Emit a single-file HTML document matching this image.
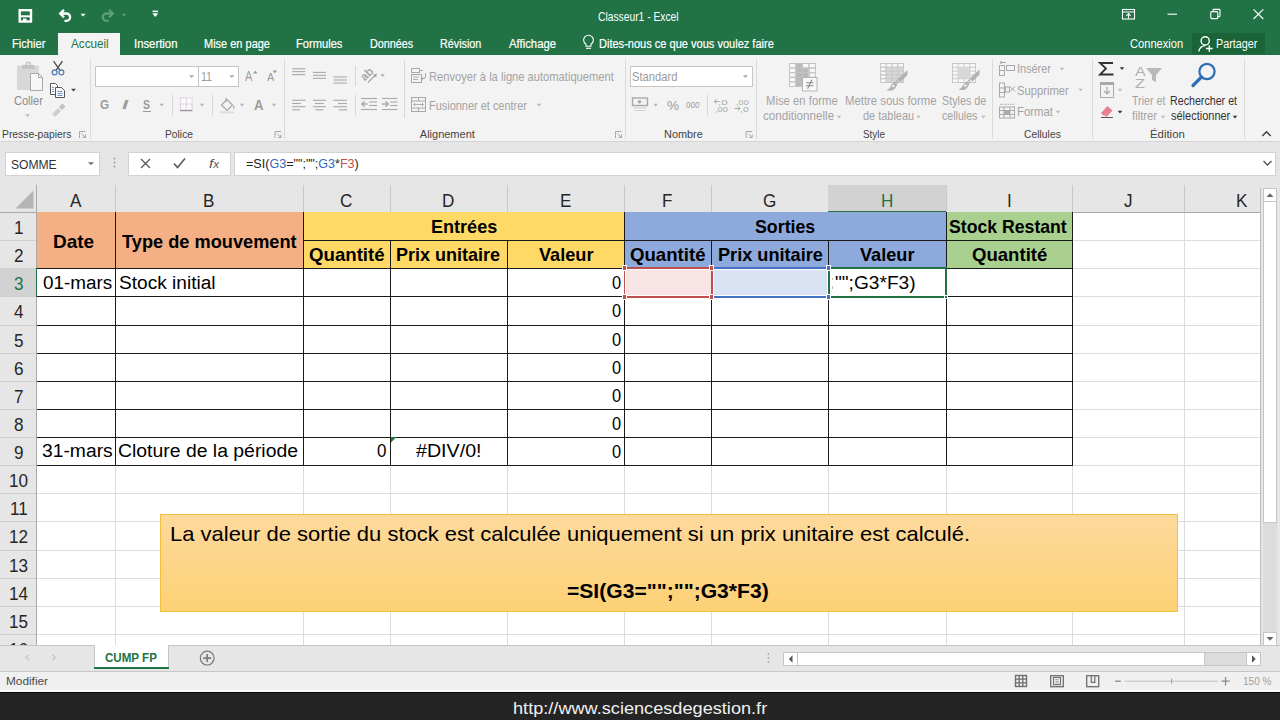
<!DOCTYPE html><html><head><meta charset="utf-8"><title>Excel</title><style>
*{margin:0;padding:0;box-sizing:border-box}
html,body{width:1280px;height:720px;overflow:hidden;background:#fff;font-family:"Liberation Sans",sans-serif}
.a{position:absolute}
.t{position:absolute;white-space:nowrap;line-height:1;transform-origin:0 0}
svg{position:absolute;left:0;top:0}
</style></head><body>
<div class="a" style="left:0px;top:0px;width:1280px;height:55px;background:#217346"></div>
<div class="t" style="left:598.40px;top:10.60px;font-size:12px;color:#ffffff;transform:scaleX(0.8574);">Classeur1 - Excel</div>
<div class="a" style="left:58px;top:33px;width:62px;height:22px;background:#f3f3f3"></div>
<div class="t" style="left:70.50px;top:37.80px;font-size:12px;color:#217346;transform:scaleX(0.9737);">Accueil</div>
<div class="t" style="left:11.57px;top:37.80px;font-size:12px;color:#ffffff;transform:scaleX(0.9286);-webkit-text-stroke:0.2px #fff;">Fichier</div>
<div class="t" style="left:133.56px;top:37.80px;font-size:12px;color:#ffffff;transform:scaleX(0.9444);-webkit-text-stroke:0.2px #fff;">Insertion</div>
<div class="t" style="left:203.78px;top:37.80px;font-size:12px;color:#ffffff;transform:scaleX(0.9155);-webkit-text-stroke:0.2px #fff;">Mise en page</div>
<div class="t" style="left:296.07px;top:37.80px;font-size:12px;color:#ffffff;transform:scaleX(0.9286);-webkit-text-stroke:0.2px #fff;">Formules</div>
<div class="t" style="left:369.70px;top:37.80px;font-size:12px;color:#ffffff;transform:scaleX(0.8979);-webkit-text-stroke:0.2px #fff;">Données</div>
<div class="t" style="left:439.70px;top:37.80px;font-size:12px;color:#ffffff;transform:scaleX(0.8978);-webkit-text-stroke:0.2px #fff;">Révision</div>
<div class="t" style="left:508.75px;top:37.80px;font-size:12px;color:#ffffff;transform:scaleX(0.9450);-webkit-text-stroke:0.2px #fff;">Affichage</div>
<div class="t" style="left:599.38px;top:37.80px;font-size:12px;color:#ffffff;transform:scaleX(0.9196);-webkit-text-stroke:0.2px #fff;">Dites-nous ce que vous voulez faire</div>
<div class="t" style="left:1129.50px;top:37.80px;font-size:12px;color:#ffffff;transform:scaleX(0.9263);">Connexion</div>
<div class="a" style="left:1192px;top:33px;width:73px;height:21px;background:#1a6438"></div>
<div class="t" style="left:1215.80px;top:37.80px;font-size:12px;color:#ffffff;transform:scaleX(0.9000);">Partager</div>
<div class="a" style="left:0px;top:55px;width:1280px;height:86px;background:#f3f3f3"></div>
<div class="a" style="left:0px;top:141px;width:1280px;height:1px;background:#d5d5d5"></div>
<div class="a" style="left:90px;top:59px;width:1px;height:80px;background:#dadada"></div>
<div class="a" style="left:284px;top:59px;width:1px;height:80px;background:#dadada"></div>
<div class="a" style="left:625px;top:59px;width:1px;height:80px;background:#dadada"></div>
<div class="a" style="left:756px;top:59px;width:1px;height:80px;background:#dadada"></div>
<div class="a" style="left:992px;top:59px;width:1px;height:80px;background:#dadada"></div>
<div class="a" style="left:1092px;top:59px;width:1px;height:80px;background:#dadada"></div>
<div class="a" style="left:1244px;top:59px;width:1px;height:80px;background:#dadada"></div>
<div class="t" style="left:2.06px;top:128.60px;font-size:11px;color:#444444;transform:scaleX(0.9384);">Presse-papiers</div>
<div class="t" style="left:165.37px;top:128.60px;font-size:11px;color:#444444;transform:scaleX(0.9345);">Police</div>
<div class="t" style="left:419.80px;top:128.60px;font-size:11px;color:#444444;">Alignement</div>
<div class="t" style="left:663.81px;top:128.60px;font-size:11px;color:#444444;transform:scaleX(0.9921);">Nombre</div>
<div class="t" style="left:863.30px;top:128.60px;font-size:11px;color:#444444;transform:scaleX(0.8958);">Style</div>
<div class="t" style="left:1023.50px;top:128.60px;font-size:11px;color:#444444;transform:scaleX(0.9410);">Cellules</div>
<div class="t" style="left:1150.27px;top:128.60px;font-size:11px;color:#444444;transform:scaleX(1.0344);">Édition</div>
<div class="t" style="left:13.50px;top:95.00px;font-size:12px;color:#8a8a8a;transform:scaleX(0.9194);">Coller</div>
<div class="a" style="left:95px;top:66px;width:104px;height:21px;background:#fff;border:1px solid #c6c6c6"></div>
<div class="a" style="left:198px;top:66px;width:41px;height:21px;background:#fff;border:1px solid #c6c6c6"></div>
<div class="t" style="left:200.85px;top:70.80px;font-size:12.5px;color:#9a9a9a;transform:scaleX(0.8500);">11</div>
<div class="t" style="left:244.70px;top:69.00px;font-size:14px;color:#9a9a9a;transform:scaleX(0.7800);">A</div>
<div class="t" style="left:266.60px;top:72.00px;font-size:11px;color:#9a9a9a;transform:scaleX(0.9875);">A</div>
<div class="t" style="left:100.00px;top:99.00px;font-size:12px;font-weight:bold;color:#9a9a9a;transform:scaleX(0.9722);">G</div>
<div class="t" style="left:121.50px;top:99.00px;font-size:12.5px;font-weight:bold;color:#9a9a9a;transform:scaleX(1.7500);font-family:"Liberation Serif",serif;"><i>I</i></div>
<div class="t" style="left:143.00px;top:99.00px;font-size:12px;font-weight:bold;color:#9a9a9a;transform:scaleX(0.8750);">S</div>
<div class="a" style="left:142.5px;top:111px;width:8px;height:1.2px;background:#9a9a9a"></div>
<div class="a" style="left:172px;top:95px;width:1px;height:21px;background:#d6d6d6"></div>
<div class="a" style="left:212px;top:95px;width:1px;height:21px;background:#d6d6d6"></div>
<div class="t" style="left:254.00px;top:97.70px;font-size:14px;font-weight:bold;color:#9a9a9a;transform:scaleX(0.9400);">A</div>
<div class="a" style="left:354.5px;top:66px;width:1px;height:20px;background:#d6d6d6"></div>
<div class="a" style="left:404px;top:60px;width:1px;height:58px;background:#d6d6d6"></div>
<div class="t" style="left:428.84px;top:69.80px;font-size:13px;color:#a3a3a3;transform:scaleX(0.8581);">Renvoyer à la ligne automatiquement</div>
<div class="a" style="left:354.5px;top:95px;width:1px;height:20px;background:#d6d6d6"></div>
<div class="t" style="left:428.86px;top:99.00px;font-size:13px;color:#a3a3a3;transform:scaleX(0.8422);">Fusionner et centrer</div>
<div class="a" style="left:630px;top:66px;width:123px;height:21px;background:#fff;border:1px solid #c6c6c6"></div>
<div class="t" style="left:631.61px;top:70.60px;font-size:12.5px;color:#9a9a9a;transform:scaleX(0.8939);">Standard</div>
<div class="t" style="left:666.50px;top:99.00px;font-size:13px;color:#9a9a9a;transform:scaleX(1.0455);">%</div>
<div class="t" style="left:685.60px;top:101.00px;font-size:9px;color:#9a9a9a;transform:scaleX(0.8933);">000</div>
<div class="a" style="left:706.5px;top:95px;width:1px;height:21px;background:#d6d6d6"></div>
<div class="t" style="left:717.94px;top:98.50px;font-size:7.5px;color:#a9a9a9;transform:scaleX(1.5600);">,0</div>
<div class="t" style="left:714.74px;top:105.50px;font-size:7.5px;color:#a9a9a9;transform:scaleX(1.2556);">,00</div>
<div class="t" style="left:735.78px;top:98.50px;font-size:7.5px;color:#a9a9a9;transform:scaleX(1.2222);">,00</div>
<div class="t" style="left:739.60px;top:105.50px;font-size:7.5px;color:#a9a9a9;transform:scaleX(1.4000);">,0</div>
<div class="t" style="left:766.29px;top:95.40px;font-size:12.5px;color:#a3a3a3;transform:scaleX(0.9064);">Mise en forme</div>
<div class="t" style="left:763.30px;top:110.00px;font-size:12.5px;color:#a3a3a3;transform:scaleX(0.9303);">conditionnelle</div>
<div class="t" style="left:845.39px;top:95.40px;font-size:12.5px;color:#a3a3a3;transform:scaleX(0.9080);">Mettre sous forme</div>
<div class="t" style="left:862.90px;top:110.00px;font-size:12.5px;color:#a3a3a3;transform:scaleX(0.8759);">de tableau</div>
<div class="t" style="left:942.14px;top:95.40px;font-size:12.5px;color:#a3a3a3;transform:scaleX(0.8600);">Styles de</div>
<div class="t" style="left:942.40px;top:110.00px;font-size:12.5px;color:#a3a3a3;transform:scaleX(0.8476);">cellules</div>
<div class="t" style="left:1016.73px;top:63.30px;font-size:12.5px;color:#a3a3a3;transform:scaleX(0.8711);">Insérer</div>
<div class="t" style="left:1016.70px;top:84.60px;font-size:12.5px;color:#a3a3a3;transform:scaleX(0.8982);">Supprimer</div>
<div class="t" style="left:1016.69px;top:106.20px;font-size:12.5px;color:#a3a3a3;transform:scaleX(0.9077);">Format</div>
<div class="t" style="left:1134.50px;top:64.50px;font-size:13px;color:#b0b0b0;transform:scaleX(1.2222);">A</div>
<div class="t" style="left:1135.00px;top:77.00px;font-size:13px;color:#b0b0b0;transform:scaleX(1.2500);">Z</div>
<div class="t" style="left:1132.30px;top:94.80px;font-size:12.5px;color:#a3a3a3;transform:scaleX(0.8538);">Trier et</div>
<div class="t" style="left:1132.30px;top:109.60px;font-size:12.5px;color:#a3a3a3;transform:scaleX(0.9036);">filtrer</div>
<div class="t" style="left:1169.95px;top:94.80px;font-size:12.5px;color:#333;transform:scaleX(0.8538);">Rechercher et</div>
<div class="t" style="left:1170.80px;top:109.60px;font-size:12.5px;color:#333;transform:scaleX(0.8794);">sélectionner</div>
<div class="a" style="left:0px;top:142px;width:1280px;height:46px;background:#e6e6e6"></div>
<div class="a" style="left:5px;top:152px;width:95px;height:24px;background:#fff;border:1px solid #d2d2d2"></div>
<div class="t" style="left:10.53px;top:159.00px;font-size:12.5px;color:#333;transform:scaleX(0.9674);">SOMME</div>
<div class="a" style="left:128px;top:152px;width:103px;height:24px;background:#fff;border:1px solid #d2d2d2"></div>
<div class="t" style="left:208.50px;top:157.00px;font-size:13px;color:#555;transform:scaleX(1.1667);font-family:"Liberation Serif",serif;"><i>f</i><i style="font-size:10px">x</i></div>
<div class="a" style="left:234px;top:152px;width:1042px;height:24px;background:#fff;border:1px solid #d2d2d2"></div>
<div class="t" style="left:245.50px;top:158.00px;font-size:12.5px;color:#222;transform:scaleX(1.0045);">=SI(<span style="color:#3868c0">G3</span>="";"";<span style="color:#3868c0">G3</span>*<span style="color:#c0504d">F3</span>)</div>
<div class="a" style="left:0px;top:185px;width:1280px;height:460px;background:#e6e6e6"></div>
<div class="a" style="left:37px;top:212px;width:1223px;height:433px;background:#fff"></div>
<div class="a" style="left:115px;top:212px;width:1px;height:433px;background:#dcdcdc"></div>
<div class="a" style="left:303px;top:212px;width:1px;height:433px;background:#dcdcdc"></div>
<div class="a" style="left:390px;top:212px;width:1px;height:433px;background:#dcdcdc"></div>
<div class="a" style="left:507px;top:212px;width:1px;height:433px;background:#dcdcdc"></div>
<div class="a" style="left:624px;top:212px;width:1px;height:433px;background:#dcdcdc"></div>
<div class="a" style="left:711px;top:212px;width:1px;height:433px;background:#dcdcdc"></div>
<div class="a" style="left:828px;top:212px;width:1px;height:433px;background:#dcdcdc"></div>
<div class="a" style="left:946px;top:212px;width:1px;height:433px;background:#dcdcdc"></div>
<div class="a" style="left:1072px;top:212px;width:1px;height:433px;background:#dcdcdc"></div>
<div class="a" style="left:1184px;top:212px;width:1px;height:433px;background:#dcdcdc"></div>
<div class="a" style="left:37px;top:240px;width:1223px;height:1px;background:#dcdcdc"></div>
<div class="a" style="left:37px;top:268px;width:1223px;height:1px;background:#dcdcdc"></div>
<div class="a" style="left:37px;top:296px;width:1223px;height:1px;background:#dcdcdc"></div>
<div class="a" style="left:37px;top:325px;width:1223px;height:1px;background:#dcdcdc"></div>
<div class="a" style="left:37px;top:353px;width:1223px;height:1px;background:#dcdcdc"></div>
<div class="a" style="left:37px;top:381px;width:1223px;height:1px;background:#dcdcdc"></div>
<div class="a" style="left:37px;top:409px;width:1223px;height:1px;background:#dcdcdc"></div>
<div class="a" style="left:37px;top:437px;width:1223px;height:1px;background:#dcdcdc"></div>
<div class="a" style="left:37px;top:465px;width:1223px;height:1px;background:#dcdcdc"></div>
<div class="a" style="left:37px;top:493px;width:1223px;height:1px;background:#dcdcdc"></div>
<div class="a" style="left:37px;top:521px;width:1223px;height:1px;background:#dcdcdc"></div>
<div class="a" style="left:37px;top:550px;width:1223px;height:1px;background:#dcdcdc"></div>
<div class="a" style="left:37px;top:578px;width:1223px;height:1px;background:#dcdcdc"></div>
<div class="a" style="left:37px;top:606px;width:1223px;height:1px;background:#dcdcdc"></div>
<div class="a" style="left:37px;top:634px;width:1223px;height:1px;background:#dcdcdc"></div>
<div class="a" style="left:115px;top:185px;width:1px;height:27px;background:#c8c8c8"></div>
<div class="a" style="left:303px;top:185px;width:1px;height:27px;background:#c8c8c8"></div>
<div class="a" style="left:390px;top:185px;width:1px;height:27px;background:#c8c8c8"></div>
<div class="a" style="left:507px;top:185px;width:1px;height:27px;background:#c8c8c8"></div>
<div class="a" style="left:624px;top:185px;width:1px;height:27px;background:#c8c8c8"></div>
<div class="a" style="left:711px;top:185px;width:1px;height:27px;background:#c8c8c8"></div>
<div class="a" style="left:828px;top:185px;width:1px;height:27px;background:#c8c8c8"></div>
<div class="a" style="left:946px;top:185px;width:1px;height:27px;background:#c8c8c8"></div>
<div class="a" style="left:1072px;top:185px;width:1px;height:27px;background:#c8c8c8"></div>
<div class="a" style="left:1184px;top:185px;width:1px;height:27px;background:#c8c8c8"></div>
<div class="a" style="left:0px;top:240px;width:37px;height:1px;background:#cfcfcf"></div>
<div class="a" style="left:0px;top:268px;width:37px;height:1px;background:#cfcfcf"></div>
<div class="a" style="left:0px;top:296px;width:37px;height:1px;background:#cfcfcf"></div>
<div class="a" style="left:0px;top:325px;width:37px;height:1px;background:#cfcfcf"></div>
<div class="a" style="left:0px;top:353px;width:37px;height:1px;background:#cfcfcf"></div>
<div class="a" style="left:0px;top:381px;width:37px;height:1px;background:#cfcfcf"></div>
<div class="a" style="left:0px;top:409px;width:37px;height:1px;background:#cfcfcf"></div>
<div class="a" style="left:0px;top:437px;width:37px;height:1px;background:#cfcfcf"></div>
<div class="a" style="left:0px;top:465px;width:37px;height:1px;background:#cfcfcf"></div>
<div class="a" style="left:0px;top:493px;width:37px;height:1px;background:#cfcfcf"></div>
<div class="a" style="left:0px;top:521px;width:37px;height:1px;background:#cfcfcf"></div>
<div class="a" style="left:0px;top:550px;width:37px;height:1px;background:#cfcfcf"></div>
<div class="a" style="left:0px;top:578px;width:37px;height:1px;background:#cfcfcf"></div>
<div class="a" style="left:0px;top:606px;width:37px;height:1px;background:#cfcfcf"></div>
<div class="a" style="left:0px;top:634px;width:37px;height:1px;background:#cfcfcf"></div>
<div class="a" style="left:0px;top:212px;width:1260px;height:1px;background:#a9a9a9"></div>
<div class="a" style="left:36px;top:185px;width:1px;height:460px;background:#a9a9a9"></div>
<div class="a" style="left:1260px;top:188px;width:1px;height:457px;background:#bcbcbc"></div>
<div class="a" style="left:828px;top:185px;width:118px;height:26px;background:#d2d2d2"></div>
<div class="a" style="left:828px;top:211px;width:118px;height:2px;background:#217346"></div>
<div class="a" style="left:0px;top:269px;width:36px;height:27px;background:#d2d2d2"></div>
<div class="a" style="left:35.6px;top:268px;width:1.6px;height:28.5px;background:#217346"></div>
<div class="t" style="left:70.15px;top:190.90px;font-size:19px;color:#262626;transform:scaleX(0.9000);">A</div>
<div class="t" style="left:203.15px;top:190.90px;font-size:19px;color:#262626;transform:scaleX(0.9000);">B</div>
<div class="t" style="left:340.20px;top:190.90px;font-size:19px;color:#262626;transform:scaleX(0.9000);">C</div>
<div class="t" style="left:442.20px;top:190.90px;font-size:19px;color:#262626;transform:scaleX(0.9000);">D</div>
<div class="t" style="left:559.65px;top:190.90px;font-size:19px;color:#262626;transform:scaleX(0.9000);">E</div>
<div class="t" style="left:662.10px;top:190.90px;font-size:19px;color:#262626;transform:scaleX(0.9000);">F</div>
<div class="t" style="left:762.75px;top:190.90px;font-size:19px;color:#262626;transform:scaleX(0.9000);">G</div>
<div class="t" style="left:880.70px;top:190.90px;font-size:19px;color:#217346;transform:scaleX(0.9000);">H</div>
<div class="t" style="left:1006.75px;top:190.90px;font-size:19px;color:#262626;transform:scaleX(0.9000);">I</div>
<div class="t" style="left:1123.95px;top:190.90px;font-size:19px;color:#262626;transform:scaleX(0.9000);">J</div>
<div class="t" style="left:1235.65px;top:190.90px;font-size:19px;color:#262626;transform:scaleX(0.9000);">K</div>
<div class="t" style="left:13.95px;top:217.60px;font-size:19px;color:#262626;transform:scaleX(0.9000);">1</div>
<div class="t" style="left:13.95px;top:245.60px;font-size:19px;color:#262626;transform:scaleX(0.9000);">2</div>
<div class="t" style="left:13.95px;top:273.60px;font-size:19px;color:#217346;transform:scaleX(0.9000);">3</div>
<div class="t" style="left:14.40px;top:301.60px;font-size:19px;color:#262626;transform:scaleX(0.9000);">4</div>
<div class="t" style="left:13.95px;top:330.60px;font-size:19px;color:#262626;transform:scaleX(0.9000);">5</div>
<div class="t" style="left:13.95px;top:358.60px;font-size:19px;color:#262626;transform:scaleX(0.9000);">6</div>
<div class="t" style="left:13.95px;top:386.60px;font-size:19px;color:#262626;transform:scaleX(0.9000);">7</div>
<div class="t" style="left:13.95px;top:414.60px;font-size:19px;color:#262626;transform:scaleX(0.9000);">8</div>
<div class="t" style="left:13.95px;top:442.60px;font-size:19px;color:#262626;transform:scaleX(0.9000);">9</div>
<div class="t" style="left:9.00px;top:470.60px;font-size:19px;color:#262626;transform:scaleX(0.9000);">10</div>
<div class="t" style="left:9.90px;top:498.60px;font-size:19px;color:#262626;transform:scaleX(0.9000);">11</div>
<div class="t" style="left:9.00px;top:526.60px;font-size:19px;color:#262626;transform:scaleX(0.9000);">12</div>
<div class="t" style="left:9.00px;top:555.60px;font-size:19px;color:#262626;transform:scaleX(0.9000);">13</div>
<div class="t" style="left:9.00px;top:583.60px;font-size:19px;color:#262626;transform:scaleX(0.9000);">14</div>
<div class="t" style="left:9.00px;top:611.60px;font-size:19px;color:#262626;transform:scaleX(0.9000);">15</div>
<div class="t" style="left:9.00px;top:639.60px;font-size:19px;color:#262626;transform:scaleX(0.9000);">16</div>
<div class="a" style="left:37px;top:212px;width:266px;height:56px;background:#f4b084"></div>
<div class="a" style="left:303px;top:212px;width:321px;height:56px;background:#ffd966"></div>
<div class="a" style="left:624px;top:212px;width:322px;height:56px;background:#8ea9db"></div>
<div class="a" style="left:946px;top:212px;width:126px;height:56px;background:#a9d08e"></div>
<div class="a" style="left:303px;top:240px;width:770px;height:1px;background:#1a1a1a"></div>
<div class="a" style="left:37px;top:268px;width:1036px;height:1px;background:#1a1a1a"></div>
<div class="a" style="left:37px;top:296px;width:1036px;height:1px;background:#1a1a1a"></div>
<div class="a" style="left:37px;top:325px;width:1036px;height:1px;background:#1a1a1a"></div>
<div class="a" style="left:37px;top:353px;width:1036px;height:1px;background:#1a1a1a"></div>
<div class="a" style="left:37px;top:381px;width:1036px;height:1px;background:#1a1a1a"></div>
<div class="a" style="left:37px;top:409px;width:1036px;height:1px;background:#1a1a1a"></div>
<div class="a" style="left:37px;top:437px;width:1036px;height:1px;background:#1a1a1a"></div>
<div class="a" style="left:37px;top:465px;width:1036px;height:1px;background:#1a1a1a"></div>
<div class="a" style="left:115px;top:212px;width:1px;height:254px;background:#1a1a1a"></div>
<div class="a" style="left:303px;top:212px;width:1px;height:254px;background:#1a1a1a"></div>
<div class="a" style="left:390px;top:240px;width:1px;height:226px;background:#1a1a1a"></div>
<div class="a" style="left:507px;top:240px;width:1px;height:226px;background:#1a1a1a"></div>
<div class="a" style="left:624px;top:212px;width:1px;height:254px;background:#1a1a1a"></div>
<div class="a" style="left:711px;top:240px;width:1px;height:226px;background:#1a1a1a"></div>
<div class="a" style="left:828px;top:240px;width:1px;height:226px;background:#1a1a1a"></div>
<div class="a" style="left:946px;top:212px;width:1px;height:254px;background:#1a1a1a"></div>
<div class="a" style="left:1072px;top:212px;width:1px;height:254px;background:#1a1a1a"></div>
<div class="t" style="left:53.37px;top:232.50px;font-size:18.5px;font-weight:bold;color:#000;transform:scaleX(1.0256);">Date</div>
<div class="t" style="left:121.90px;top:232.50px;font-size:18.5px;font-weight:bold;color:#000;transform:scaleX(0.9837);">Type de mouvement</div>
<div class="t" style="left:431.02px;top:218.10px;font-size:18.5px;font-weight:bold;color:#000;transform:scaleX(0.9758);">Entrées</div>
<div class="t" style="left:755.04px;top:218.10px;font-size:18.5px;font-weight:bold;color:#000;transform:scaleX(0.9607);">Sorties</div>
<div class="t" style="left:949.45px;top:218.10px;font-size:18.5px;font-weight:bold;color:#000;transform:scaleX(0.9545);">Stock Restant</div>
<div class="t" style="left:309.00px;top:246.10px;font-size:18.5px;font-weight:bold;color:#000;transform:scaleX(1.0080);">Quantité</div>
<div class="t" style="left:396.43px;top:246.10px;font-size:18.5px;font-weight:bold;color:#000;transform:scaleX(0.9736);">Prix unitaire</div>
<div class="t" style="left:538.50px;top:246.10px;font-size:18.5px;font-weight:bold;color:#000;transform:scaleX(0.9804);">Valeur</div>
<div class="t" style="left:630.30px;top:246.10px;font-size:18.5px;font-weight:bold;color:#000;transform:scaleX(1.0067);">Quantité</div>
<div class="t" style="left:717.52px;top:246.10px;font-size:18.5px;font-weight:bold;color:#000;transform:scaleX(0.9802);">Prix unitaire</div>
<div class="t" style="left:859.80px;top:246.10px;font-size:18.5px;font-weight:bold;color:#000;transform:scaleX(0.9804);">Valeur</div>
<div class="t" style="left:971.70px;top:246.10px;font-size:18.5px;font-weight:bold;color:#000;transform:scaleX(1.0040);">Quantité</div>
<div class="t" style="left:42.60px;top:274.40px;font-size:18px;color:#000;transform:scaleX(1.0485);">01-mars</div>
<div class="t" style="left:118.54px;top:274.40px;font-size:18px;color:#000;transform:scaleX(1.0607);">Stock initial</div>
<div class="t" style="left:611.50px;top:274.40px;font-size:18px;color:#000;transform:scaleX(0.9100);">0</div>
<div class="t" style="left:611.50px;top:302.40px;font-size:18px;color:#000;transform:scaleX(0.9100);">0</div>
<div class="t" style="left:611.50px;top:331.40px;font-size:18px;color:#000;transform:scaleX(0.9100);">0</div>
<div class="t" style="left:611.50px;top:359.40px;font-size:18px;color:#000;transform:scaleX(0.9100);">0</div>
<div class="t" style="left:611.50px;top:387.40px;font-size:18px;color:#000;transform:scaleX(0.9100);">0</div>
<div class="t" style="left:611.50px;top:415.40px;font-size:18px;color:#000;transform:scaleX(0.9100);">0</div>
<div class="t" style="left:611.50px;top:443.40px;font-size:18px;color:#000;transform:scaleX(0.9100);">0</div>
<div class="t" style="left:41.53px;top:442.30px;font-size:18px;color:#000;transform:scaleX(1.0708);">31-mars</div>
<div class="t" style="left:118.12px;top:442.30px;font-size:18px;color:#000;transform:scaleX(1.0771);">Cloture de la période</div>
<div class="t" style="left:377.00px;top:442.30px;font-size:18px;color:#000;transform:scaleX(0.9400);">0</div>
<div class="t" style="left:416.20px;top:442.30px;font-size:18px;color:#000;transform:scaleX(1.0915);">#DIV/0!</div>
<div class="a" style="left:626px;top:270px;width:85px;height:25px;background:#f8e4e4"></div>
<div class="a" style="left:714px;top:270px;width:113px;height:25px;background:#dae3f3"></div>
<div class="a" style="left:623.5px;top:267px;width:89px;height:1.6px;background:#c0504d"></div>
<div class="a" style="left:623.5px;top:296.2px;width:89px;height:1.6px;background:#c0504d"></div>
<div class="a" style="left:623.5px;top:267px;width:1.6px;height:30.8px;background:#c0504d"></div>
<div class="a" style="left:711px;top:267px;width:1.6px;height:30.8px;background:#c0504d"></div>
<div class="a" style="left:712.6px;top:267px;width:116px;height:1.6px;background:#4472c4"></div>
<div class="a" style="left:712.6px;top:296.2px;width:116px;height:1.6px;background:#4472c4"></div>
<div class="a" style="left:828px;top:267px;width:118.5px;height:2px;background:#217346"></div>
<div class="a" style="left:828px;top:295.8px;width:118.5px;height:2px;background:#217346"></div>
<div class="a" style="left:828px;top:267px;width:2px;height:30.8px;background:#217346"></div>
<div class="a" style="left:945px;top:267px;width:2px;height:30.8px;background:#217346"></div>
<div class="a" style="left:621.6px;top:265.4px;width:5.2px;height:5.2px;background:#c0504d;border:1px solid #fff"></div>
<div class="a" style="left:709.1999999999999px;top:265.4px;width:5.2px;height:5.2px;background:#c0504d;border:1px solid #fff"></div>
<div class="a" style="left:621.6px;top:294.4px;width:5.2px;height:5.2px;background:#c0504d;border:1px solid #fff"></div>
<div class="a" style="left:709.1999999999999px;top:294.4px;width:5.2px;height:5.2px;background:#c0504d;border:1px solid #fff"></div>
<div class="a" style="left:825.9px;top:265.4px;width:5.2px;height:5.2px;background:#4472c4;border:1px solid #fff"></div>
<div class="a" style="left:825.9px;top:294.4px;width:5.2px;height:5.2px;background:#4472c4;border:1px solid #fff"></div>
<div class="a" style="left:943.5px;top:294.5px;width:4px;height:4px;background:#217346;border:0.5px solid #fff"></div>
<div class="t" style="left:835.20px;top:274.20px;font-size:18px;color:#000;transform:scaleX(1.0640);">"";G3*F3)</div>
<div class="a" style="left:832.3px;top:278px;width:1px;height:2px;background:#bbb"></div>
<div class="a" style="left:832.3px;top:286px;width:1px;height:2.5px;background:#bbb"></div>
<div class="a" style="left:160px;top:514px;width:1018px;height:98px;background:linear-gradient(#fdd99c,#fdd175);border:1px solid #f3c03e"></div>
<div class="t" style="left:169.95px;top:522.50px;font-size:21px;color:#000;transform:scaleX(1.0463);">La valeur de sortie du stock est calculée uniquement si un prix unitaire est calculé.</div>
<div class="t" style="left:567.40px;top:582.00px;font-size:19.5px;font-weight:bold;color:#000;transform:scaleX(1.0812);">=SI(G3="";"";G3*F3)</div>
<div class="a" style="left:1261px;top:185px;width:19px;height:460px;background:#e6e6e6"></div>
<div class="a" style="left:1263px;top:201px;width:14px;height:322px;background:#fff;border:1px solid #c6c6c6"></div>
<div class="a" style="left:1263px;top:188px;width:14px;height:14px;background:#fff;border:1px solid #c6c6c6"></div>
<div class="a" style="left:1263px;top:632px;width:14px;height:14px;background:#fff;border:1px solid #c6c6c6"></div>
<div class="a" style="left:1263px;top:523px;width:14px;height:109px;background:#dcdcdc"></div>
<div class="a" style="left:0px;top:645px;width:1280px;height:27px;background:#e6e6e6"></div>
<div class="a" style="left:0px;top:645px;width:1280px;height:1px;background:#c6c6c6"></div>
<div class="a" style="left:0px;top:671px;width:1280px;height:1px;background:#c6c6c6"></div>
<div class="a" style="left:93.5px;top:645px;width:75px;height:23px;background:#fff;border-left:1px solid #c6c6c6;border-right:1px solid #c6c6c6"></div>
<div class="a" style="left:93.5px;top:666.5px;width:75px;height:2px;background:#217346"></div>
<div class="t" style="left:105.40px;top:651.60px;font-size:12px;font-weight:bold;color:#217346;transform:scaleX(0.9648);">CUMP FP</div>
<div class="a" style="left:783px;top:652px;width:478px;height:14px;background:#dcdcdc;border:1px solid #c6c6c6"></div>
<div class="a" style="left:783px;top:652px;width:15px;height:14px;background:#fff;border:1px solid #c6c6c6"></div>
<div class="a" style="left:797px;top:652px;width:408px;height:14px;background:#fff;border:1px solid #c6c6c6"></div>
<div class="a" style="left:1246px;top:652px;width:15px;height:14px;background:#fff;border:1px solid #c6c6c6"></div>
<div class="a" style="left:0px;top:672px;width:1280px;height:20px;background:#f0f0f0"></div>
<div class="t" style="left:5.93px;top:676.40px;font-size:11px;color:#4a4a4a;transform:scaleX(1.0737);">Modifier</div>
<div class="t" style="left:1243.09px;top:675.80px;font-size:11px;color:#a0a0a0;transform:scaleX(0.9100);">150 %</div>
<div class="a" style="left:0px;top:692px;width:1280px;height:28px;background:#242424"></div>
<div class="a" style="left:0px;top:692px;width:1280px;height:1px;background:#080808"></div>
<div class="a" style="left:0px;top:690px;width:1280px;height:2px;background:#f9f9f9"></div>
<div class="t" style="left:512.93px;top:699.60px;font-size:17px;color:#f0f0f0;transform:scaleX(1.0675);">http://www.sciencesdegestion.fr</div>
<svg width="1280" height="720" viewBox="0 0 1280 720"><rect x="19.7" y="10.2" width="11.3" height="11.3" fill="none" stroke="#ffffff" stroke-width="2.4"/><rect x="20" y="15.3" width="10.5" height="2" fill="#ffffff"/><rect x="23" y="18.5" width="3.5" height="2.5" fill="#ffffff"/><path d="M60.5 13.5 H66.5 A3.6 3.6 0 0 1 66.5 20.8 H64.5" fill="none" stroke="#ffffff" stroke-width="2.3"/><path d="M64 9.8 L60.2 13.6 L64 17.4" fill="none" stroke="#ffffff" stroke-width="2.3"/><path d="M80.5 13.8 H85.6 L83.05 16.6 Z" fill="#ffffff"/><path d="M112.5 13.5 H106.5 A3.6 3.6 0 0 0 106.5 20.8 H108.5" fill="none" stroke="#5f9d7a" stroke-width="2.3"/><path d="M109 9.8 L112.8 13.6 L109 17.4" fill="none" stroke="#5f9d7a" stroke-width="2.3"/><path d="M121.8 13.8 H126.3 L124.05 16.4 Z" fill="#5f9d7a"/><rect x="152.5" y="10.6" width="5.5" height="1.5" fill="#ffffff"/><path d="M152.3 13.3 H158.2 L155.25 16.9 Z" fill="#ffffff"/><rect x="1122.5" y="9.5" width="12" height="9.5" fill="none" stroke="#ffffff" stroke-width="1.1"/><line x1="1122.5" y1="12" x2="1134.5" y2="12" stroke="#ffffff" stroke-width="1"/><path d="M1128.5 18.5 V13.8 M1126.3 16 L1128.5 13.6 L1130.7 16" fill="none" stroke="#ffffff" stroke-width="1.1"/><line x1="1167.5" y1="14.2" x2="1177" y2="14.2" stroke="#ffffff" stroke-width="1.1"/><rect x="1210.8" y="11.6" width="7" height="7" rx="1" fill="none" stroke="#ffffff" stroke-width="1.1"/><path d="M1213 11.6 V10.2 Q1213 9.4 1213.8 9.4 H1219.2 Q1220 9.4 1220 10.2 V15.8 Q1220 16.6 1219.2 16.6 H1217.8" fill="none" stroke="#ffffff" stroke-width="1.1"/><path d="M1253.5 9.3 L1263.3 19 M1263.3 9.3 L1253.5 19" stroke="#ffffff" stroke-width="1.1"/><path d="M586 46.2 V44.3 Q583.6 42.6 583.6 40.1 A4.9 4.9 0 0 1 593.4 40.1 Q593.4 42.6 591 44.3 V46.2 Z" fill="none" stroke="#ffffff" stroke-width="1.1"/><line x1="586" y1="48.3" x2="591" y2="48.3" stroke="#ffffff" stroke-width="1.1"/><circle cx="1205.2" cy="40.9" r="4.1" fill="none" stroke="#ffffff" stroke-width="1.4"/><path d="M1198.8 51.5 Q1199.5 46.3 1205 45.6" fill="none" stroke="#ffffff" stroke-width="1.4"/><path d="M1206 48.5 H1212.6 M1209.3 45.2 V51.8" stroke="#ffffff" stroke-width="1.4"/><path d="M79.5 138 V131.5 H85.5" fill="none" stroke="#a8a8a8" stroke-width="1"/><path d="M81.5 133.5 L85.5 137.5 M85.5 134.5 V137.5 H82.5" fill="none" stroke="#a8a8a8" stroke-width="1"/><path d="M275.0 138 V131.5 H281.0" fill="none" stroke="#a8a8a8" stroke-width="1"/><path d="M277.0 133.5 L281.0 137.5 M281.0 134.5 V137.5 H278.0" fill="none" stroke="#a8a8a8" stroke-width="1"/><path d="M615.5 138 V131.5 H621.5" fill="none" stroke="#a8a8a8" stroke-width="1"/><path d="M617.5 133.5 L621.5 137.5 M621.5 134.5 V137.5 H618.5" fill="none" stroke="#a8a8a8" stroke-width="1"/><path d="M746.1 138 V131.5 H752.1" fill="none" stroke="#a8a8a8" stroke-width="1"/><path d="M748.1 133.5 L752.1 137.5 M752.1 134.5 V137.5 H749.1" fill="none" stroke="#a8a8a8" stroke-width="1"/><path d="M1262.3 136 L1266.5 131.8 L1270.7 136" fill="none" stroke="#444" stroke-width="1.6"/><rect x="17" y="65.5" width="22" height="24.5" rx="1.2" fill="#d9d7d9"/><path d="M22 69 V66.5 Q22 65 23.5 65 H33.5 Q35 65 35 66.5 V69 Z" fill="#c4c4c4"/><circle cx="28.5" cy="64.3" r="2" fill="none" stroke="#c4c4c4" stroke-width="1.4"/><path d="M30.5 73.5 H38.5 L42.5 77.5 V90.5 H30.5 Z" fill="#f7f7f7" stroke="#a9a9a9" stroke-width="1"/><path d="M38.5 73.5 V77.5 H42.5" fill="none" stroke="#a9a9a9" stroke-width="1"/><path d="M25.25 114.2 H29.75 L27.5 117.0 Z" fill="#b5b5b5"/><path d="M53.6 61.2 L59.8 70.2 M62.4 61.2 L56.2 70.2" stroke="#4a4a4a" stroke-width="1.3" fill="none"/><circle cx="54.6" cy="72.4" r="2.4" fill="none" stroke="#5b80b0" stroke-width="1.3"/><circle cx="61.4" cy="72.4" r="2.4" fill="none" stroke="#5b80b0" stroke-width="1.3"/><path d="M50.5 83.5 H55.5 L57.5 85.5 V94.5 H50.5 Z" fill="#fff" stroke="#555" stroke-width="1"/><path d="M55.5 87.5 H61.5 L64.5 90.5 V97.5 H55.5 Z" fill="#fff" stroke="#555" stroke-width="1"/><path d="M52 87.5 H54 M52 89.5 H54 M52 91.5 H54 M57.5 91.5 H62.5 M57.5 93.5 H62.5 M57.5 95.5 H62.5" stroke="#5584c4" stroke-width="0.9"/><path d="M71.0 88.7 H76.0 L73.5 91.5 Z" fill="#444"/><path d="M52 114 L58 108 L61 111 L55 117 Z" fill="#cfcfcf"/><path d="M59 107 L62.5 103.5 L65.5 106.5 L62 110 Z" fill="#c2c2c2"/><path d="M189.1 75.2 H194.1 L191.6 78.0 Z" fill="#a8a8a8"/><path d="M229.4 75.2 H234.4 L231.9 78.0 Z" fill="#a8a8a8"/><path d="M253 73.5 L255.3 70.8 L257.6 73.5 Z" fill="#9a9a9a"/><path d="M272.5 70.6 H277.2 L274.85 73.2 Z" fill="#9a9a9a"/><path d="M159.45 103.7 H163.95 L161.7 106.5 Z" fill="#b5b5b5"/><rect x="180.5" y="98" width="11.5" height="12" fill="#fbfbfb" stroke="#d3bfd3" stroke-width="1.2" stroke-dasharray="1.3 0.9"/><path d="M186.25 98 V110 M180.5 104 H192" stroke="#d3bfd3" stroke-width="1.2" stroke-dasharray="1.3 0.9"/><path d="M180 110.6 H192.5" stroke="#9a9a9a" stroke-width="1.3"/><path d="M199.75 103.7 H204.25 L202 106.5 Z" fill="#b5b5b5"/><path d="M221.5 105 L227 99.5 L232.5 105 L227 110.5 Z" fill="none" stroke="#a8a8a8" stroke-width="1.2"/><path d="M226 98 V102" stroke="#a8a8a8" stroke-width="1.2"/><path d="M233 105.5 Q235 108 233.5 109" stroke="#a8a8a8" fill="none" stroke-width="1.2"/><rect x="220" y="111.5" width="14" height="1.8" fill="#dcdcdc"/><path d="M239.75 103.7 H244.25 L242 106.5 Z" fill="#b5b5b5"/><path d="M271.75 103.7 H276.25 L274 106.5 Z" fill="#b5b5b5"/><path d="M292.2 68.8 H305.3" stroke="#a9a9a9" stroke-width="1.1"/><path d="M292.2 71.6 H305.3" stroke="#a9a9a9" stroke-width="1.1"/><path d="M292.2 74.6 H305.3" stroke="#a9a9a9" stroke-width="1.1"/><path d="M313 72.4 H326" stroke="#a9a9a9" stroke-width="1.1"/><path d="M313 75.3 H326" stroke="#a9a9a9" stroke-width="1.1"/><path d="M313 78.3 H326" stroke="#a9a9a9" stroke-width="1.1"/><path d="M333.4 77 H346.9" stroke="#a9a9a9" stroke-width="1.1"/><path d="M333.4 80 H346.9" stroke="#a9a9a9" stroke-width="1.1"/><path d="M333.4 83 H346.9" stroke="#a9a9a9" stroke-width="1.1"/><text x="0" y="0" transform="translate(369.5 76.8) rotate(-45)" font-family="Liberation Sans" font-weight="bold" font-size="11.5" fill="#a9a9a9" text-anchor="middle">ab</text><path d="M368 82.5 L375.5 75" fill="none" stroke="#a9a9a9" stroke-width="1.2"/><path d="M377 73.5 L373 74.5 L376 77.5 Z" fill="#a9a9a9"/><path d="M380.35 74.2 H384.85 L382.6 77.0 Z" fill="#b5b5b5"/><rect x="411.5" y="68.5" width="8" height="4" fill="none" stroke="#a9a9a9" stroke-width="1"/><rect x="411.5" y="74.5" width="10" height="8" fill="none" stroke="#a9a9a9" stroke-width="1"/><path d="M413 77 H419 M413 79.5 H418" stroke="#a9a9a9" stroke-width="0.9"/><path d="M420 70.5 H423 M425.5 73 V77 Q425.5 78.5 424 78.5 H421.5 M423 76.8 L421.3 78.5 L423 80.2" fill="none" stroke="#a9a9a9" stroke-width="1"/><path d="M292.2 100.3 H305.6" stroke="#a9a9a9" stroke-width="1.1"/><path d="M292.2 103.5 H301" stroke="#a9a9a9" stroke-width="1.1"/><path d="M292.2 106.7 H305.6" stroke="#a9a9a9" stroke-width="1.1"/><path d="M292.2 109.8 H300" stroke="#a9a9a9" stroke-width="1.1"/><path d="M313 100.3 H326" stroke="#a9a9a9" stroke-width="1.1"/><path d="M315 103.5 H324" stroke="#a9a9a9" stroke-width="1.1"/><path d="M313 106.7 H326" stroke="#a9a9a9" stroke-width="1.1"/><path d="M315.5 109.8 H323.5" stroke="#a9a9a9" stroke-width="1.1"/><path d="M333.4 100.3 H347" stroke="#a9a9a9" stroke-width="1.1"/><path d="M338 103.5 H347" stroke="#a9a9a9" stroke-width="1.1"/><path d="M333.4 106.7 H347" stroke="#a9a9a9" stroke-width="1.1"/><path d="M339 109.8 H347" stroke="#a9a9a9" stroke-width="1.1"/><path d="M361 98.5 H377" stroke="#a9a9a9" stroke-width="1.1"/><path d="M369 102 H377" stroke="#a9a9a9" stroke-width="1.1"/><path d="M369 105.5 H377" stroke="#a9a9a9" stroke-width="1.1"/><path d="M361 109.5 H377" stroke="#a9a9a9" stroke-width="1.1"/><path d="M362 104 H367.5 M364.5 101.2 L361.8 104 L364.5 106.8" fill="none" stroke="#a9a9a9" stroke-width="1.3"/><path d="M382 98.5 H397.5" stroke="#a9a9a9" stroke-width="1.1"/><path d="M390 102 H397.5" stroke="#a9a9a9" stroke-width="1.1"/><path d="M390 105.5 H397.5" stroke="#a9a9a9" stroke-width="1.1"/><path d="M382 109.5 H397.5" stroke="#a9a9a9" stroke-width="1.1"/><path d="M382 104 H388 M385.5 101.2 L388.3 104 L385.5 106.8" fill="none" stroke="#a9a9a9" stroke-width="1.3"/><rect x="411.5" y="97.5" width="14" height="14" fill="none" stroke="#a9a9a9" stroke-width="1"/><path d="M411.5 101 H425.5 M411.5 108 H425.5 M418.5 97.5 V101 M418.5 108 V111.5" stroke="#a9a9a9" stroke-width="1"/><path d="M413.5 104.5 H423.5 M415 103 L413.5 104.5 L415 106 M422 103 L423.5 104.5 L422 106" fill="none" stroke="#a9a9a9" stroke-width="0.9"/><path d="M536.75 103.7 H541.25 L539 106.5 Z" fill="#b5b5b5"/><path d="M742.9 75.2 H747.9 L745.4 78.0 Z" fill="#a8a8a8"/><rect x="632.5" y="98" width="15" height="7.5" fill="none" stroke="#a9a9a9" stroke-width="1.4"/><circle cx="639.5" cy="101.8" r="1.8" fill="#a9a9a9"/><path d="M634 108 H646 M635 110.5 H645" stroke="#d2d2d2" stroke-width="1.2"/><path d="M653.35 103.7 H657.85 L655.6 106.5 Z" fill="#b5b5b5"/><path d="M714.5 101.5 H719.5 M716.5 99.3 L714.3 101.5 L716.5 103.7" fill="none" stroke="#a9a9a9" stroke-width="1"/><path d="M734.5 108.5 H740 M737.8 106.3 L740 108.5 L737.8 110.7" fill="none" stroke="#a9a9a9" stroke-width="1"/><rect x="789.5" y="63.5" width="26" height="23" fill="#f8f8f8" stroke="#c4c4c4" stroke-width="1"/><path d="M796.0 63.5 V86.5" stroke="#c4c4c4" stroke-width="1"/><path d="M802.5 63.5 V86.5" stroke="#c4c4c4" stroke-width="1"/><path d="M809.0 63.5 V86.5" stroke="#c4c4c4" stroke-width="1"/><path d="M789.5 68.1 H815.5" stroke="#c4c4c4" stroke-width="1"/><path d="M789.5 72.7 H815.5" stroke="#c4c4c4" stroke-width="1"/><path d="M789.5 77.3 H815.5" stroke="#c4c4c4" stroke-width="1"/><path d="M789.5 81.9 H815.5" stroke="#c4c4c4" stroke-width="1"/><rect x="795.5" y="63.5" width="6.5" height="23" fill="#b9b9b9"/><rect x="802" y="68" width="6.5" height="9" fill="#b9b9b9"/><rect x="789.5" y="63.5" width="26" height="23" fill="none" stroke="#c4c4c4" stroke-width="1"/><path d="M796.0 63.5 V86.5" stroke="#c4c4c4" stroke-width="1"/><path d="M802.5 63.5 V86.5" stroke="#c4c4c4" stroke-width="1"/><path d="M809.0 63.5 V86.5" stroke="#c4c4c4" stroke-width="1"/><path d="M789.5 68.1 H815.5" stroke="#c4c4c4" stroke-width="1"/><path d="M789.5 72.7 H815.5" stroke="#c4c4c4" stroke-width="1"/><path d="M789.5 77.3 H815.5" stroke="#c4c4c4" stroke-width="1"/><path d="M789.5 81.9 H815.5" stroke="#c4c4c4" stroke-width="1"/><rect x="802.5" y="77.5" width="14.5" height="13.5" fill="#f8f8f8" stroke="#b5b5b5" stroke-width="1"/><path d="M806 82.8 H813.5 M806 85.8 H813.5 M811.8 79.8 L807.6 88.8" stroke="#8a8a8a" stroke-width="1.1" fill="none"/><path d="M836.75 115.7 H841.25 L839 118.5 Z" fill="#bdbdbd"/><rect x="880.5" y="63.5" width="23" height="19" fill="#f8f8f8" stroke="#c8c8c8" stroke-width="1"/><path d="M886.2 63.5 V82.5" stroke="#c8c8c8" stroke-width="1"/><path d="M892.0 63.5 V82.5" stroke="#c8c8c8" stroke-width="1"/><path d="M897.8 63.5 V82.5" stroke="#c8c8c8" stroke-width="1"/><path d="M880.5 67.3 H903.5" stroke="#c8c8c8" stroke-width="1"/><path d="M880.5 71.1 H903.5" stroke="#c8c8c8" stroke-width="1"/><path d="M880.5 74.9 H903.5" stroke="#c8c8c8" stroke-width="1"/><path d="M880.5 78.7 H903.5" stroke="#c8c8c8" stroke-width="1"/><rect x="885.75" y="67" width="17" height="15" fill="#d8d8d8"/><rect x="880.5" y="63.5" width="23" height="19" fill="none" stroke="#c8c8c8" stroke-width="1"/><path d="M886.2 63.5 V82.5" stroke="#c8c8c8" stroke-width="1"/><path d="M892.0 63.5 V82.5" stroke="#c8c8c8" stroke-width="1"/><path d="M897.8 63.5 V82.5" stroke="#c8c8c8" stroke-width="1"/><path d="M880.5 67.3 H903.5" stroke="#c8c8c8" stroke-width="1"/><path d="M880.5 71.1 H903.5" stroke="#c8c8c8" stroke-width="1"/><path d="M880.5 74.9 H903.5" stroke="#c8c8c8" stroke-width="1"/><path d="M880.5 78.7 H903.5" stroke="#c8c8c8" stroke-width="1"/><path d="M907.5 70 L907.5 75 L900.5 82 L897.5 79 Z" fill="#b3b3b3"/><path d="M899.0 82.5 L896.5 80 L895.5 81 L898.0 83.5 Z" fill="#b3b3b3"/><path d="M895.0 81.5 L897.5 84 Q895.5 89 892.5 90.5 L886.5 90.5 Q890.5 88 892.0 84 Z" fill="#b3b3b3"/><circle cx="893.3" cy="86" r="1.3" fill="#f3f3f3"/><path d="M916.15 115.7 H920.65 L918.4 118.5 Z" fill="#bdbdbd"/><rect x="952.5" y="63.5" width="23" height="19" fill="#f8f8f8" stroke="#c8c8c8" stroke-width="1"/><path d="M958.2 63.5 V82.5" stroke="#c8c8c8" stroke-width="1"/><path d="M964.0 63.5 V82.5" stroke="#c8c8c8" stroke-width="1"/><path d="M969.8 63.5 V82.5" stroke="#c8c8c8" stroke-width="1"/><path d="M952.5 67.3 H975.5" stroke="#c8c8c8" stroke-width="1"/><path d="M952.5 71.1 H975.5" stroke="#c8c8c8" stroke-width="1"/><path d="M952.5 74.9 H975.5" stroke="#c8c8c8" stroke-width="1"/><path d="M952.5 78.7 H975.5" stroke="#c8c8c8" stroke-width="1"/><rect x="957.75" y="67" width="11.5" height="11" fill="#d8d8d8"/><path d="M979.5 69.5 L979.5 74.5 L972.5 81.5 L969.5 78.5 Z" fill="#b3b3b3"/><path d="M971.0 82.0 L968.5 79.5 L967.5 80.5 L970.0 83.0 Z" fill="#b3b3b3"/><path d="M967.0 81.0 L969.5 83.5 Q967.5 88.5 964.5 90.0 L958.5 90.0 Q962.5 87.5 964.0 83.5 Z" fill="#b3b3b3"/><circle cx="965.3" cy="85.5" r="1.3" fill="#f3f3f3"/><path d="M981.15 115.7 H985.65 L983.4 118.5 Z" fill="#bdbdbd"/><rect x="999.5" y="65.5" width="5" height="10" fill="none" stroke="#a9a9a9" stroke-width="1"/><path d="M999.5 70.5 H1004.5" stroke="#a9a9a9"/><rect x="1006.5" y="65.5" width="8" height="5" fill="none" stroke="#a9a9a9" stroke-width="1"/><path d="M1000 62.5 H1006 M1001.8 61.2 L1000 62.5 L1001.8 63.8" fill="none" stroke="#a9a9a9" stroke-width="1"/><path d="M1059.75 67.7 H1064.25 L1062 70.5 Z" fill="#bdbdbd"/><rect x="999.5" y="83.0" width="5" height="14" fill="none" stroke="#a9a9a9" stroke-width="1"/><path d="M999.5 88.0 H1004.5 M999.5 92.5 H1004.5" stroke="#a9a9a9"/><rect x="1005.5" y="87.0" width="4" height="5" fill="none" stroke="#a9a9a9" stroke-width="1"/><path d="M1010 86.5 L1015 91.5 M1015 86.5 L1010 91.5" stroke="#a9a9a9" stroke-width="1"/><path d="M1078.35 88.7 H1082.85 L1080.6 91.5 Z" fill="#bdbdbd"/><rect x="999.5" y="107.0" width="15" height="11" fill="none" stroke="#a9a9a9" stroke-width="1"/><path d="M999.5 110.5 H1014.5 M999.5 114.5 H1014.5 M1004 107.0 V118.0 M1010 107.0 V118.0" stroke="#a9a9a9" stroke-width="1"/><rect x="1004" y="110.5" width="6" height="4" fill="#a9a9a9"/><path d="M1000 104.3 H1014" stroke="#a9a9a9" stroke-width="1" stroke-dasharray="1.5 1"/><path d="M1055.75 110.7 H1060.25 L1058 113.5 Z" fill="#bdbdbd"/><path d="M1113 63 H1100 L1106 68.5 L1100 74.5 H1113.5" fill="none" stroke="#333" stroke-width="1.8" stroke-linejoin="miter"/><path d="M1119.75 67.2 H1124.25 L1122 70.0 Z" fill="#333"/><rect x="1100.5" y="82.5" width="13" height="15" fill="none" stroke="#a9a9a9" stroke-width="1"/><rect x="1100.5" y="82.5" width="13" height="2.5" fill="#a9a9a9"/><path d="M1107 87 V94 M1104 91 L1107 94 L1110 91" fill="none" stroke="#a9a9a9" stroke-width="1.2"/><path d="M1117.75 88.7 H1122.25 L1120 91.5 Z" fill="#bdbdbd"/><path d="M1101.5 112.5 L1107.5 106 L1112.5 110.5 L1106.5 117 Z" fill="#e8808e"/><path d="M1101.5 112.5 L1104.5 115.5" stroke="#e8808e" stroke-width="1.5"/><path d="M1101 117.5 H1113" stroke="#555" stroke-width="1"/><path d="M1117.75 110.7 H1122.25 L1120 113.5 Z" fill="#333"/><path d="M1146 68 H1162 L1156 75 V82 L1152 80 V75 Z" fill="#b8b8b8"/><path d="M1160.75 115.7 H1165.25 L1163 118.5 Z" fill="#bdbdbd"/><circle cx="1207" cy="71.5" r="7.6" fill="none" stroke="#2f6db5" stroke-width="2.2"/><path d="M1201.5 77 L1193 85.5" stroke="#2f6db5" stroke-width="3.2" stroke-linecap="round"/><path d="M1232.75 115.7 H1237.25 L1235 118.5 Z" fill="#333"/><path d="M88.0 162.2 H94.0 L91 165.0 Z" fill="#666"/><circle cx="114.5" cy="158.5" r="0.9" fill="#999"/><circle cx="114.5" cy="162.5" r="0.9" fill="#999"/><circle cx="114.5" cy="166.5" r="0.9" fill="#999"/><path d="M141 159 L150 168 M150 159 L141 168" stroke="#5a5a5a" stroke-width="1.3"/><path d="M174 163.5 L177.5 167.5 L185 158.5" fill="none" stroke="#5a5a5a" stroke-width="1.6"/><path d="M1263.5 161 L1267.5 165 L1271.5 161" fill="none" stroke="#555" stroke-width="1.4"/><path d="M33.5 190.5 V208.5 H15.5 Z" fill="#b4b4b4"/><path d="M391 437 H396.5 L391 442.5 Z" fill="#1e7b3c"/><path d="M1266.5 197 L1270 193.3 L1273.5 197 Z" fill="#666"/><path d="M1266.5 637 L1270 640.7 L1273.5 637 Z" fill="#666"/><path d="M29 654.6 L26 657.4 L29 660.2" fill="none" stroke="#c4c4c4" stroke-width="1.2"/><path d="M52.3 654.6 L55.3 657.4 L52.3 660.2" fill="none" stroke="#c4c4c4" stroke-width="1.2"/><circle cx="207.2" cy="658.1" r="6.9" fill="none" stroke="#7a7a7a" stroke-width="1.2"/><path d="M203.2 658.1 H211.2 M207.2 654.1 V662.1" stroke="#7a7a7a" stroke-width="1.6"/><circle cx="768.4" cy="654" r="0.9" fill="#aaa"/><circle cx="768.4" cy="658" r="0.9" fill="#aaa"/><circle cx="768.4" cy="662" r="0.9" fill="#aaa"/><path d="M792.5 655.3 L788.8 659 L792.5 662.7 Z" fill="#555"/><path d="M1252 655.3 L1255.7 659 L1252 662.7 Z" fill="#555"/><rect x="1015.5" y="675.5" width="11" height="11" fill="none" stroke="#6e6e6e" stroke-width="1.4"/><path d="M1019.2 675.5 V686.5 M1022.8 675.5 V686.5 M1015.5 679.2 H1026.5 M1015.5 682.8 H1026.5" stroke="#6e6e6e" stroke-width="1.3"/><rect x="1050.7" y="675.7" width="12.6" height="11" fill="none" stroke="#6e6e6e" stroke-width="1.3"/><rect x="1053.5" y="677.5" width="7" height="7.2" fill="none" stroke="#6e6e6e" stroke-width="1.1"/><path d="M1055.3 679.6 H1058.7 M1055.3 681.4 H1058.7 M1055.3 683 H1058.7" stroke="#8a8a8a" stroke-width="0.8"/><rect x="1086.7" y="675.7" width="12" height="11" fill="none" stroke="#6e6e6e" stroke-width="1.3"/><path d="M1091.3 675.7 V682.3 H1094.8 V675.7" fill="none" stroke="#6e6e6e" stroke-width="1.2"/><path d="M1115 681.2 H1120.8" stroke="#8a8a8a" stroke-width="1.3"/><path d="M1124.7 681.2 H1217.7" stroke="#bdbdbd" stroke-width="1"/><path d="M1171.7 678.5 V684" stroke="#999" stroke-width="1"/><path d="M1221.4 681.2 H1229.7 M1225.55 677 V685.4" stroke="#8a8a8a" stroke-width="1.3"/></svg>
</body></html>
